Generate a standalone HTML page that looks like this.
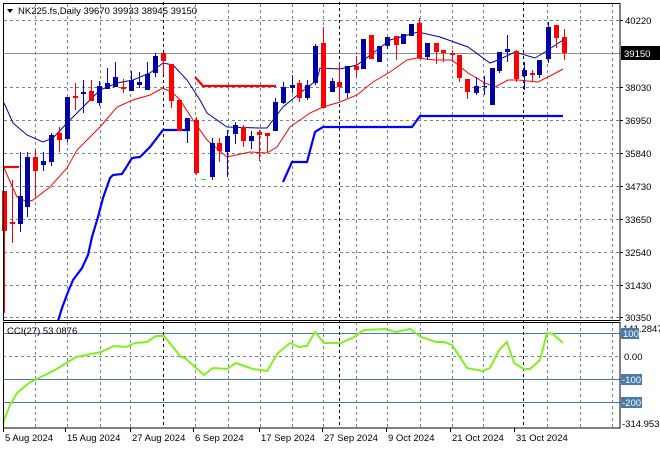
<!DOCTYPE html>
<html><head><meta charset="utf-8"><style>
html,body{margin:0;padding:0;background:#fff;width:660px;height:450px;overflow:hidden}
svg{display:block}
text{font-family:"Liberation Sans",sans-serif;font-size:9.5px;fill:#000}
</style></head><body>
<svg id="s" width="660" height="450" xmlns="http://www.w3.org/2000/svg">
<rect x="0" y="0" width="660" height="450" fill="#fff"/>
<g id="grid" stroke="#7a8490" stroke-dasharray="3,3" stroke-width="1" fill="none"></g>
<g id="blk" stroke="#000" stroke-dasharray="3,3" stroke-width="1" fill="none">
<line x1="163.5" y1="2" x2="163.5" y2="428"/><line x1="339.5" y1="2" x2="339.5" y2="428"/><line x1="523.5" y1="2" x2="523.5" y2="428"/>
</g>
<line x1="3" y1="53.5" x2="620" y2="53.5" stroke="#8890a0" stroke-width="1"/>
<line x1="3" y1="333.5" x2="620" y2="333.5" stroke="#4a7aa8"/>
<line x1="3" y1="379.5" x2="620" y2="379.5" stroke="#4a7aa8"/>
<line x1="3" y1="402.5" x2="620" y2="402.5" stroke="#4a7aa8"/>
<line x1="3" y1="356.5" x2="620" y2="356.5" stroke="#7a8490" stroke-dasharray="3,3"/>
<polyline fill="none" stroke="#0000a0" stroke-width="1" points="4,103 13,123 27,135 43,142 53,138 67,123 83,107 100,90 117,83 133,80 150,73 163,63 173,65 187,80 200,100 207,113 227,127 260,128 267,128 283,107 300,93 317,80 320,68 340,69 357,65 377,50 390,40 418,32 440,37 468,47 490,63 498,60 515,52 535,58 545,52 563,40"/>
<polyline fill="none" stroke="#ff0000" stroke-width="1" points="4,168 17,197 27,202 33,200 50,187 67,168 77,150 100,127 117,107 133,100 150,95 163,88 173,93 180,100 193,120 207,140 227,157 250,152 267,153 277,147 290,127 310,113 323,107 340,102 357,95 373,82 390,72 407,60 417,58 435,60 452,60 468,73 485,83 495,87 508,80 518,80 538,82 552,75 563,69"/>
<polyline fill="none" stroke="#0000ff" stroke-width="2.2" points="58,321 62,308 68,292 73,280 82,268 88,255 92,237 98,217 103,198 110,178 113,175 122,174 132,158 140,157 150,147 163,130 188,130"/>
<polyline fill="none" stroke="#0000ff" stroke-width="2.2" points="283,182 292,162 307,162 315,132 323,127 412,127 420,116 563,116"/>
<polyline fill="none" stroke="#ff0000" stroke-width="2.2" points="4,167 19,167"/>
<polyline fill="none" stroke="#ff0000" stroke-width="2.2" points="195,77 203,86 276,86"/>
<line x1="201" y1="179.5" x2="206" y2="179.5" stroke="#00ff00"/>
<g id="candles"></g>
<polyline fill="none" stroke="#80f020" stroke-width="2" points="3,423 10,405 17,393 29,383 55,370 76,357 101,352 114,346 126,347 135,343 147,342 156,336 164,336 181,357 185,358 204,375 213,368 227,369 236,363 253,369 267,371 278,353 290,343 299,347 307,346 315,332 324,343 341,343 354,337 364,330 385,329 396,332 410,329 421,337 436,342 444,342 452,345 467,368 482,371 490,368 499,350 507,342 514,363 524,369 530,369 540,360 547,333 553,334 563,343"/>
<rect x="3.5" y="3.5" width="616.5" height="317" fill="none" stroke="#000"/>
<rect x="3.5" y="322.5" width="616.5" height="105.5" fill="none" stroke="#000"/>
<polygon points="7,9 13,9 10,13" fill="#000"/>
<text x="18" y="14">NK225.fs,Daily  39670 39933 38945 39150</text>
<text x="7" y="334">CCI(27) 53.0876</text>
<g id="axis"></g>
<rect x="621" y="46" width="39" height="14" fill="#000"/>
<text x="624" y="57" style="fill:#fff">39150</text>
<text x="623" y="332">141.2847</text>
<rect x="621" y="328" width="18" height="11" fill="#4a7aa8"/><text x="623" y="337" style="fill:#fff">100</text>
<text x="624" y="360">0.00</text>
<rect x="621" y="374" width="21" height="11" fill="#4a7aa8"/><text x="622" y="383" style="fill:#fff">-100</text>
<rect x="621" y="397" width="21" height="11" fill="#4a7aa8"/><text x="622" y="406" style="fill:#fff">-200</text>
<text x="622" y="427">-314.9530</text>
<g id="dates"></g>
</svg>
<script>
var NS="http://www.w3.org/2000/svg";
function el(p,t,a){var e=document.createElementNS(NS,t);for(var k in a)e.setAttribute(k,a[k]);document.getElementById(p).appendChild(e);return e;}
var vx=[35,67,100,130,195,228,260,292,323,356,387,420,452,483,547,580,612];
vx.forEach(function(x){el('grid','line',{x1:x+.5,y1:4,x2:x+.5,y2:428});});
var hy=[20,87,120,153,186,219,252,285,317];
hy.forEach(function(y){el('grid','line',{x1:4,y1:y+.5,x2:620,y2:y+.5});});
var lab=[[20,'40220'],[87,'38030'],[120,'36950'],[153,'35840'],[186,'34730'],[219,'33650'],[252,'32540'],[285,'31430'],[317,'30350']];
lab.forEach(function(l){el('axis','line',{x1:620,y1:l[0]+.5,x2:623,y2:l[0]+.5,stroke:'#000'});var t=el('axis','text',{x:625,y:l[0]+4});t.textContent=l[1];});
var d=[[3,'5 Aug 2024'],[65,'15 Aug 2024'],[130,'27 Aug 2024'],[193,'6 Sep 2024'],[259,'17 Sep 2024'],[322,'27 Sep 2024'],[386,'9 Oct 2024'],[450,'21 Oct 2024'],[514,'31 Oct 2024']];
d.forEach(function(l){el('dates','line',{x1:l[0]+.5,y1:428,x2:l[0]+.5,y2:432,stroke:'#000'});var t=el('dates','text',{x:l[0]+2,y:441});t.textContent=l[1];});
var c=[[4,191,231,191,313,'r'],[12,222,224,180,243,'r'],[20,196,224,152,232,'b'],[27,157,207,152,217,'b'],[35,157,171,150,196,'r'],[43,161,165,152,171,'b'],[51,135,162,133,166,'b'],[59,133,140,127,152,'r'],[67,97,139,97,142,'b'],[75,96,98,83,110,'r'],[83,92,94,80,113,'b'],[91,91,101,80,101,'r'],[99,86,103,81,106,'b'],[107,83,89,68,89,'b'],[115,77,87,62,87,'b'],[123,87,89,79,93,'r'],[131,80,91,71,91,'b'],[139,82,85,72,88,'b'],[147,74,90,62,90,'b'],[155,56,73,53,77,'b'],[163,53,61,53,74,'r'],[171,64,101,64,108,'r'],[179,100,131,100,131,'r'],[187,118,131,118,143,'b'],[196,120,173,117,175,'r'],[212,143,177,138,180,'b'],[219,143,151,138,162,'r'],[227,136,152,130,177,'b'],[235,125,134,122,144,'b'],[243,127,141,125,147,'r'],[251,136,141,131,149,'b'],[259,132,135,130,161,'r'],[267,133,136,133,153,'r'],[275,102,131,98,131,'b'],[283,87,103,82,104,'b'],[292,85,88,75,93,'b'],[299,83,98,80,102,'r'],[307,85,98,80,100,'b'],[315,46,83,44,85,'b'],[323,43,108,27,108,'r'],[332,81,92,78,92,'b'],[339,82,87,62,100,'r'],[347,66,93,66,98,'b'],[356,66,70,56,77,'r'],[363,39,69,39,69,'b'],[371,35,59,35,59,'r'],[379,46,62,46,62,'b'],[387,37,46,37,49,'b'],[396,36,45,36,60,'r'],[403,34,44,34,44,'b'],[411,24,36,24,36,'b'],[419,23,58,18,58,'r'],[427,43,57,43,60,'b'],[436,43,52,43,64,'r'],[443,50,53,50,62,'r'],[452,53,55,50,62,'r'],[459,55,78,55,82,'r'],[467,79,92,79,99,'r'],[476,86,93,77,95,'b'],[484,86,87,76,95,'b'],[492,68,105,68,105,'b'],[499,52,71,52,73,'b'],[507,49,52,35,62,'b'],[516,51,79,50,82,'r'],[524,70,76,62,90,'b'],[532,73,75,70,82,'r'],[539,60,75,60,78,'b'],[548,27,59,22,63,'b'],[556,25,38,25,48,'r'],[564,37,53,29,60,'r']];
c.forEach(function(k){var col=k[5]=='r'?'#ff0000':'#0000a8',wc=k[5]=='r'?'#ff0000':'#0000ff';
el('candles','line',{x1:k[0]+.5,y1:k[3],x2:k[0]+.5,y2:k[4],stroke:wc});
el('candles','rect',{x:k[0]-2,y:k[1],width:5,height:Math.max(1,k[2]-k[1]),fill:col});});
</script>
</body></html>
